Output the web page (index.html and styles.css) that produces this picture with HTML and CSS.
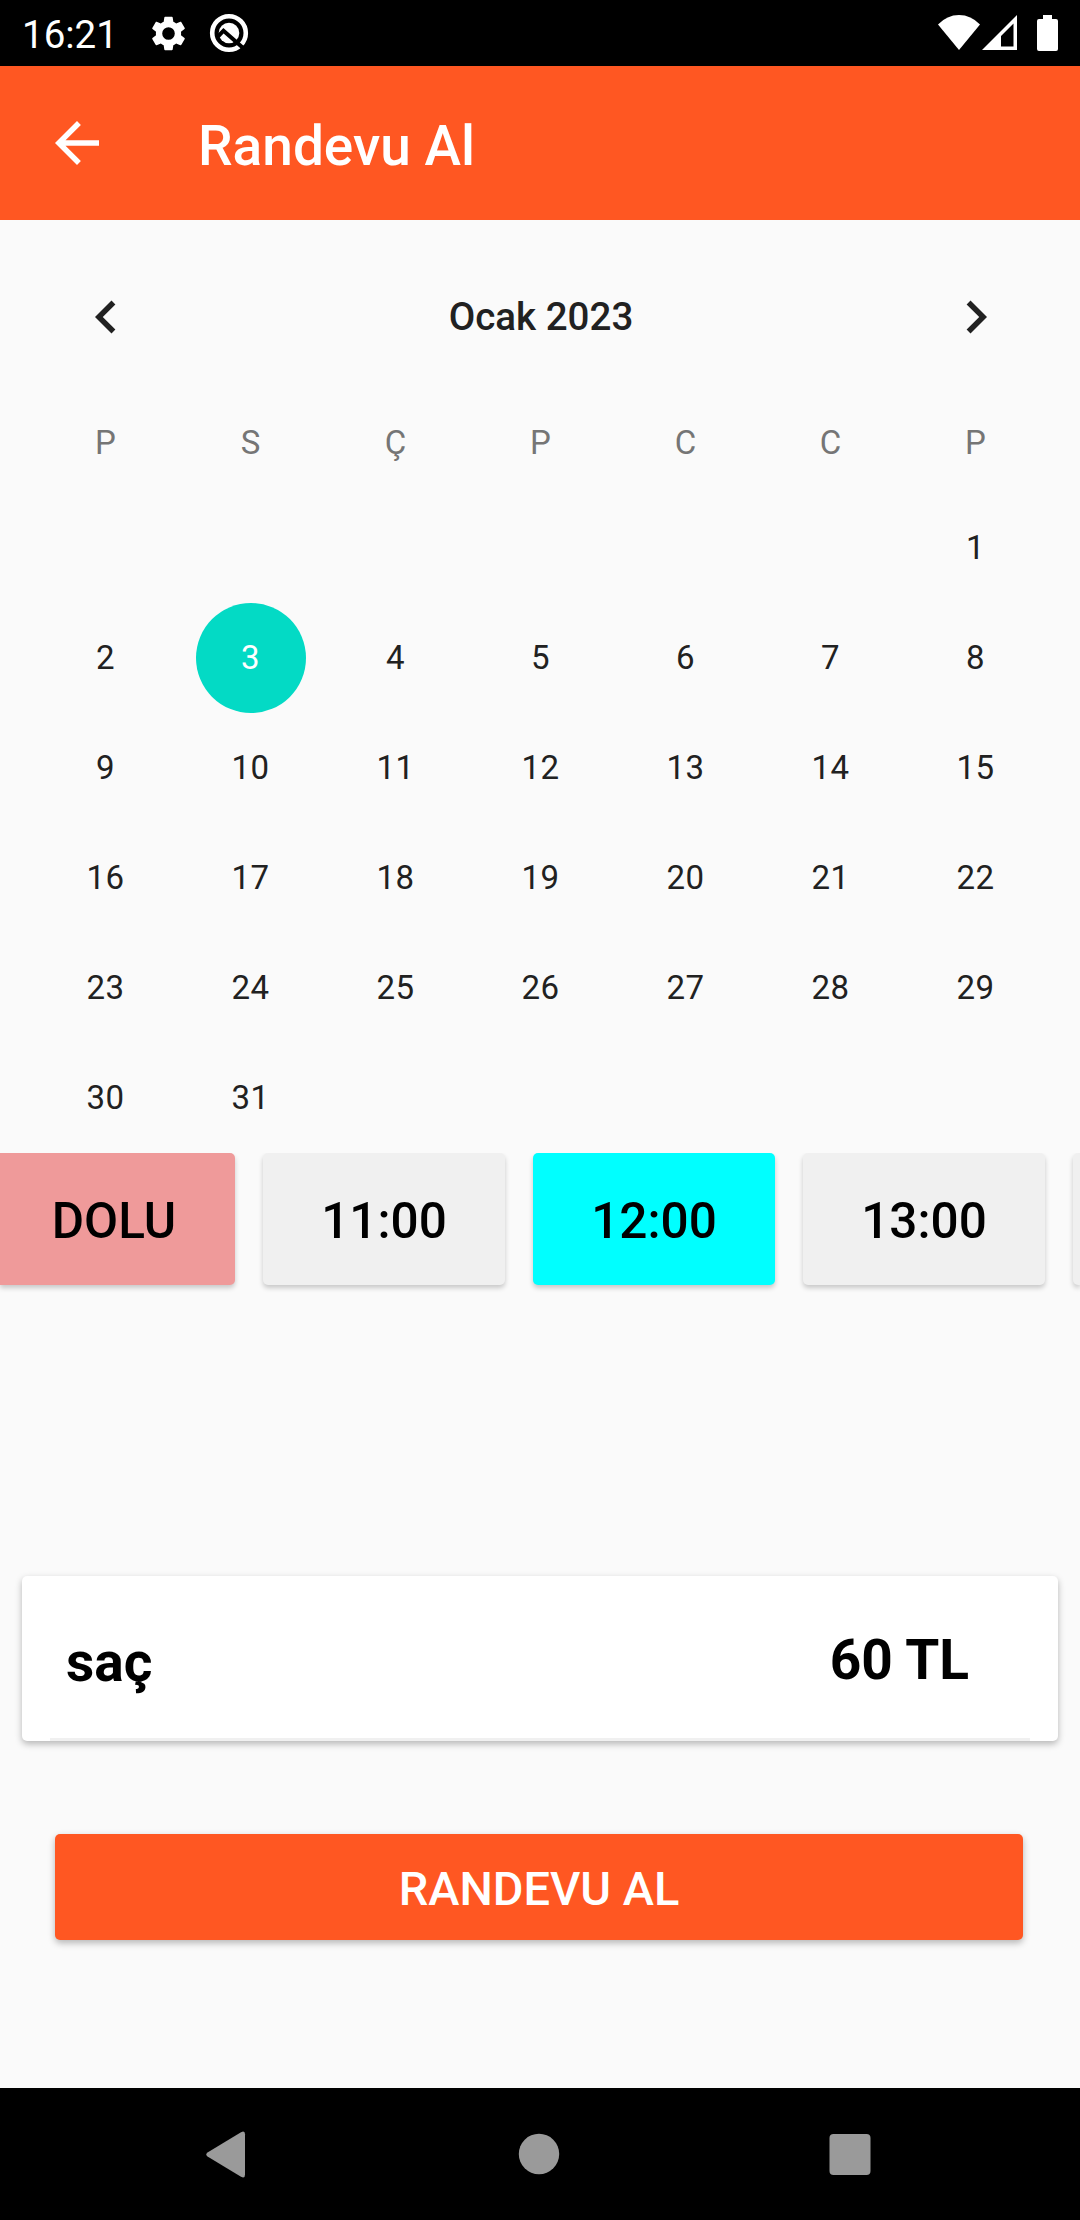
FILE: index.html
```html
<!DOCTYPE html>
<html lang="tr">
<head>
<meta charset="utf-8">
<title>Randevu Al</title>
<link rel="stylesheet" href="styles.css">
</head>
<body>
<div class="status">
  <span class="clock">16:21</span>
  <svg class="gear" viewBox="2 2 20 20"><path fill="#fff" fill-rule="evenodd" d="M19.14 12.94c.04-.3.06-.61.06-.94 0-.32-.02-.64-.07-.94l2.03-1.58c.18-.14.23-.41.12-.61l-1.92-3.32c-.12-.22-.37-.29-.59-.22l-2.39.96c-.5-.38-1.03-.7-1.62-.94l-.36-2.54c-.04-.24-.24-.41-.48-.41h-3.84c-.24 0-.43.17-.47.41l-.36 2.54c-.59.24-1.13.57-1.62.94l-2.39-.96c-.22-.08-.47 0-.59.22L2.74 8.87c-.12.21-.08.47.12.61l2.03 1.58c-.05.3-.09.63-.09.94s.02.64.07.94l-2.03 1.58c-.18.14-.23.41-.12.61l1.92 3.32c.12.22.37.29.59.22l2.39-.96c.5.38 1.03.7 1.62.94l.36 2.54c.05.24.24.41.48.41h3.84c.24 0 .44-.17.47-.41l.36-2.54c.59-.24 1.13-.56 1.62-.94l2.39.96c.22.08.47 0 .59-.22l1.92-3.32c.12-.22.07-.47-.12-.61zM12 15.6A3.6 3.6 0 1 1 12 8.4a3.600 3.600 0 0 1 0 7.200z"/></svg>
  <svg class="debug" viewBox="0 0 40 40"><circle cx="20" cy="20" r="16.8" fill="none" stroke="#fff" stroke-width="4.6"/><circle cx="20" cy="20" r="10.3" fill="#fff"/><path d="M8.500 24l6-6.300 20.500 18" fill="none" stroke="#000" stroke-width="4"/></svg>
  <span class="grow"></span>
  <svg class="wifi" viewBox="0 0 42 35"><path fill="#fff" d="M0 9.5Q9 0 21 0t21 9.5L21 35z"/></svg>
  <svg class="signal" viewBox="0 0 35 35"><path fill="#fff" fill-rule="evenodd" d="M0 35L35 0v35zM19 31.500H31.500V8.500L19 21z"/></svg>
  <svg class="battery" viewBox="0 0 21 36"><path fill="#fff" d="M6 0h9v4h4a2 2 0 0 1 2 2v28a2 2 0 0 1-2 2H2a2 2 0 0 1-2-2V6a2 2 0 0 1 2-2h4z"/></svg>
</div>
<header class="appbar">
  <svg class="back" viewBox="0 0 24 24"><path fill="#fff" d="M20 11H7.830l5.590-5.590L12 4l-8 8 8 8 1.410-1.410L7.830 13H20v-2z"/></svg>
  <h1>Randevu Al</h1>
</header>
<main>
  <section class="calendar">
    <div class="month">
      <svg viewBox="0 0 24 24"><path fill="#212121" d="M15.410 7.410L14 6l-6 6 6 6 1.410-1.410L10.830 12z"/></svg>
      <span>Ocak 2023</span>
      <svg viewBox="0 0 24 24"><path fill="#212121" d="M8.590 16.590L10 18l6-6-6-6-1.410 1.410L13.170 12z"/></svg>
    </div>
    <div class="weekdays"><span>P</span><span>S</span><span>Ç</span><span>P</span><span>C</span><span>C</span><span>P</span></div>
    <div class="days">
      <span class="first">1</span>
      <span>2</span><span class="selected">3</span><span>4</span><span>5</span><span>6</span><span>7</span><span>8</span>
      <span>9</span><span>10</span><span>11</span><span>12</span><span>13</span><span>14</span><span>15</span>
      <span>16</span><span>17</span><span>18</span><span>19</span><span>20</span><span>21</span><span>22</span>
      <span>23</span><span>24</span><span>25</span><span>26</span><span>27</span><span>28</span><span>29</span>
      <span>30</span><span>31</span>
    </div>
  </section>
  <section class="slots">
    <div class="slot full">DOLU</div>
    <div class="slot">11:00</div>
    <div class="slot picked">12:00</div>
    <div class="slot">13:00</div>
    <div class="slot next"></div>
  </section>
  <section class="service">
    <span class="name">saç</span>
    <span class="price">60 TL</span>
  </section>
  <button class="book">RANDEVU AL</button>
</main>
<nav class="navbar">
  <svg viewBox="0 0 48 48"><path fill="#9a9a9a" d="M4.500 22.500 38 2.200q4-2 4 2v40.600q0 4-4 2L4.500 26.500q-2.500-2 0-4z"/></svg>
  <svg viewBox="0 0 48 48"><circle cx="24" cy="24" r="20.200" fill="#9a9a9a"/></svg>
  <svg viewBox="0 0 48 48"><rect x="3.500" y="4" width="41" height="41" rx="4" fill="#9a9a9a"/></svg>
</nav>
</body>
</html>
```
FILE: styles.css
```css
* { box-sizing: border-box; }
body {
  margin: 0;
  width: 1080px;
  height: 2220px;
  display: flex;
  flex-direction: column;
  overflow: hidden;
  background: #fafafa;
  color: #212121;
  font-family: Roboto, "Liberation Sans", sans-serif;
}
svg { display: block; flex: none; }

.status {
  height: 66px;
  display: flex;
  align-items: flex-start;
  padding: 0 22px;
  background: #000;
  color: #fff;
}
.clock { width: 129px; font-size: 38.5px; line-height: 45px; padding-top: 12px; }
.gear { width: 35px; height: 35px; margin-top: 16px; }
.debug { width: 40px; height: 40px; margin: 13px 0 0 23px; }
.grow { flex: 1; }
.wifi { width: 42px; height: 35px; margin-top: 15px; }
.signal { width: 35px; height: 35px; margin: 15px 0 0 2px; }
.battery { width: 21px; height: 36px; margin: 15px 0 0 20px; }

.appbar {
  height: 154px;
  display: flex;
  align-items: center;
  padding-left: 44px;
  background: #ff5722;
  color: #fff;
}
.back { width: 66px; height: 66px; }
.appbar h1 { margin: 6px 0 0 88px; font-size: 55px; line-height: 64px; font-weight: 500; }

main { flex: 1; }
.calendar { padding: 0 32px 0 33px; }
.month {
  height: 194px;
  display: flex;
  justify-content: space-between;
  align-items: center;
  padding: 0 39px 0 40px;
  font-size: 38.5px;
  font-weight: 500;
}
.month span { padding-bottom: 2px; }
.month svg { width: 66px; height: 66px; }
.weekdays, .days { display: grid; grid-template-columns: repeat(7, 145px); text-align: center; font-size: 33px; }
.weekdays { height: 79px; line-height: 58px; color: #757575; }
.days { grid-auto-rows: 110px; line-height: 110px; letter-spacing: 0.5px; }
.days .first { grid-column: 7; }
.selected { width: 110px; justify-self: center; border-radius: 50%; background: #03dac5; color: #fff; }

/* Horizontally scrolled list of hours; the bottom padding leaves room for the shadows. */
.slots { display: flex; gap: 28px; width: 1080px; padding-bottom: 12px; overflow: hidden; }
.slot {
  flex: none;
  width: 242px;
  height: 132px;
  border-radius: 5px;
  background: #f0f0f0;
  color: #000;
  font-size: 49.5px;
  font-weight: 500;
  line-height: 136px;
  text-align: center;
  box-shadow: 0 3px 5px rgba(0, 0, 0, 0.2);
}
.full { width: 235px; padding-right: 7px; border-radius: 0 5px 5px 0; background: #ef9a9a; }
.picked { background: #0ff; }
.next { width: 7px; border-radius: 5px 0 0 5px; }

.service {
  height: 165px;
  margin: 279px 22px 0;
  padding: 0 89px 0 44px;
  display: flex;
  justify-content: space-between;
  align-items: center;
  border-radius: 5px;
  background: linear-gradient(#f0f0f0, #f0f0f0) 28px 162px / 980px 3px no-repeat #fff;
  box-shadow: 0 3px 7px rgba(0, 0, 0, 0.28);
  color: #000;
  font-size: 55px;
  font-weight: 700;
}
.name { padding-top: 6px; }
.price { padding-top: 3px; }
.book {
  display: block;
  width: 968px;
  height: 106px;
  margin: 93px 0 0 55px;
  padding: 2px 0 0;
  border: 0;
  border-radius: 5px;
  background: #ff5722;
  box-shadow: 0 3px 7px rgba(0, 0, 0, 0.28);
  color: #fff;
  font: 500 47px Roboto, "Liberation Sans", sans-serif;
}

.navbar {
  height: 132px;
  display: flex;
  justify-content: space-between;
  align-items: center;
  padding: 0 206px 0 203px;
  background: #000;
}
.navbar svg { width: 48px; height: 48px; }
```
